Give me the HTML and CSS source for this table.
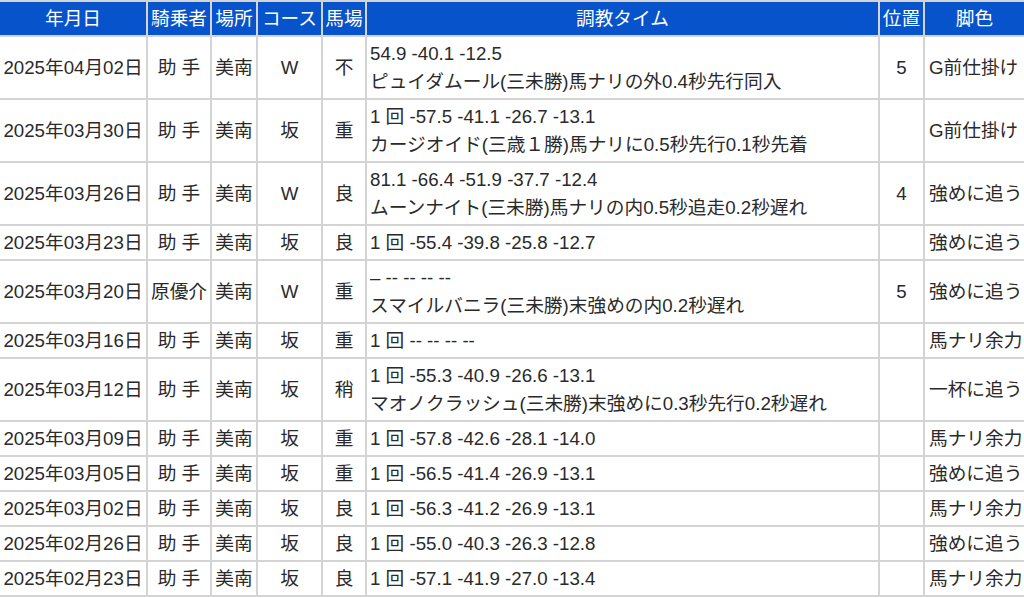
FILE: index.html
```html
<!DOCTYPE html>
<html lang="ja">
<head>
<meta charset="utf-8">
<title>調教タイム</title>
<link rel="stylesheet" href="styles.css">
</head>
<body>
<table class="chokyo">
  <thead>
    <tr>
      <th class="c-date">年月日</th>
      <th class="c-rider">騎乗者</th>
      <th class="c-place">場所</th>
      <th class="c-course">コース</th>
      <th class="c-baba">馬場</th>
      <th class="c-time">調教タイム</th>
      <th class="c-pos">位置</th>
      <th class="c-leg">脚色</th>
    </tr>
  </thead>
  <tbody>
    <tr>
      <td class="ctr">2025年04月02日</td><td class="ctr">助 手</td><td class="ctr">美南</td><td class="ctr">W</td><td class="ctr">不</td>
      <td class="time">54.9 -40.1 -12.5<br>ピュイダムール(三未勝)馬ナリの外0.4秒先行同入</td>
      <td class="ctr">5</td><td class="leg">G前仕掛け</td>
    </tr>
    <tr>
      <td class="ctr">2025年03月30日</td><td class="ctr">助 手</td><td class="ctr">美南</td><td class="ctr">坂</td><td class="ctr">重</td>
      <td class="time">1 回 -57.5 -41.1 -26.7 -13.1<br>カージオイド(三歳１勝)馬ナリに0.5秒先行0.1秒先着</td>
      <td class="ctr"></td><td class="leg">G前仕掛け</td>
    </tr>
    <tr>
      <td class="ctr">2025年03月26日</td><td class="ctr">助 手</td><td class="ctr">美南</td><td class="ctr">W</td><td class="ctr">良</td>
      <td class="time">81.1 -66.4 -51.9 -37.7 -12.4<br>ムーンナイト(三未勝)馬ナリの内0.5秒追走0.2秒遅れ</td>
      <td class="ctr">4</td><td class="leg">強めに追う</td>
    </tr>
    <tr>
      <td class="ctr">2025年03月23日</td><td class="ctr">助 手</td><td class="ctr">美南</td><td class="ctr">坂</td><td class="ctr">良</td>
      <td class="time">1 回 -55.4 -39.8 -25.8 -12.7</td>
      <td class="ctr"></td><td class="leg">強めに追う</td>
    </tr>
    <tr>
      <td class="ctr">2025年03月20日</td><td class="ctr">原優介</td><td class="ctr">美南</td><td class="ctr">W</td><td class="ctr">重</td>
      <td class="time">– -- -- -- --<br>スマイルバニラ(三未勝)末強めの内0.2秒遅れ</td>
      <td class="ctr">5</td><td class="leg">強めに追う</td>
    </tr>
    <tr>
      <td class="ctr">2025年03月16日</td><td class="ctr">助 手</td><td class="ctr">美南</td><td class="ctr">坂</td><td class="ctr">重</td>
      <td class="time">1 回 -- -- -- --</td>
      <td class="ctr"></td><td class="leg">馬ナリ余力</td>
    </tr>
    <tr>
      <td class="ctr">2025年03月12日</td><td class="ctr">助 手</td><td class="ctr">美南</td><td class="ctr">坂</td><td class="ctr">稍</td>
      <td class="time">1 回 -55.3 -40.9 -26.6 -13.1<br>マオノクラッシュ(三未勝)末強めに0.3秒先行0.2秒遅れ</td>
      <td class="ctr"></td><td class="leg">一杯に追う</td>
    </tr>
    <tr>
      <td class="ctr">2025年03月09日</td><td class="ctr">助 手</td><td class="ctr">美南</td><td class="ctr">坂</td><td class="ctr">重</td>
      <td class="time">1 回 -57.8 -42.6 -28.1 -14.0</td>
      <td class="ctr"></td><td class="leg">馬ナリ余力</td>
    </tr>
    <tr>
      <td class="ctr">2025年03月05日</td><td class="ctr">助 手</td><td class="ctr">美南</td><td class="ctr">坂</td><td class="ctr">重</td>
      <td class="time">1 回 -56.5 -41.4 -26.9 -13.1</td>
      <td class="ctr"></td><td class="leg">強めに追う</td>
    </tr>
    <tr>
      <td class="ctr">2025年03月02日</td><td class="ctr">助 手</td><td class="ctr">美南</td><td class="ctr">坂</td><td class="ctr">良</td>
      <td class="time">1 回 -56.3 -41.2 -26.9 -13.1</td>
      <td class="ctr"></td><td class="leg">馬ナリ余力</td>
    </tr>
    <tr>
      <td class="ctr">2025年02月26日</td><td class="ctr">助 手</td><td class="ctr">美南</td><td class="ctr">坂</td><td class="ctr">良</td>
      <td class="time">1 回 -55.0 -40.3 -26.3 -12.8</td>
      <td class="ctr"></td><td class="leg">強めに追う</td>
    </tr>
    <tr>
      <td class="ctr">2025年02月23日</td><td class="ctr">助 手</td><td class="ctr">美南</td><td class="ctr">坂</td><td class="ctr">良</td>
      <td class="time">1 回 -57.1 -41.9 -27.0 -13.4</td>
      <td class="ctr"></td><td class="leg">馬ナリ余力</td>
    </tr>
  </tbody>
</table>
</body>
</html>
```
FILE: styles.css
```css
html, body {
  margin: 0;
  padding: 0;
  background: #ffffff;
  overflow: hidden;
}

.chokyo {
  width: 1024px;
  table-layout: fixed;
  border-collapse: separate;
  border-spacing: 0;
  border-top: 2px solid #d4d4d4;
  font-family: "Liberation Sans", "Noto Sans CJK JP", sans-serif;
  font-size: 18.7px;
  color: #2a2a2a;
}

.chokyo th,
.chokyo td {
  box-sizing: border-box;
  border-right: 2px solid #d4d4d4;
  border-bottom: 2px solid #d4d4d4;
  line-height: 28px;
  vertical-align: middle;
  white-space: nowrap;
  overflow: hidden;
}

.chokyo th {
  background: #0753cc;
  color: #ffffff;
  font-weight: normal;
  text-align: center;
  padding: 3px 0 2px;
}

.chokyo td {
  padding: 3px 0 2px;
}

.chokyo th:last-child,
.chokyo td:last-child {
  border-right: none;
}

.c-date { width: 148px; }
.c-rider { width: 64px; }
.c-place { width: 46px; }
.c-course { width: 65px; }
.c-baba { width: 44px; }
.c-time { width: 513px; }
.c-pos { width: 45px; }
.c-leg { width: 99px; }

.ctr {
  text-align: center;
}

.chokyo td.time {
  text-align: left;
  padding-left: 3px;
}

.chokyo td.leg {
  text-align: left;
  padding-left: 4px;
}
```
